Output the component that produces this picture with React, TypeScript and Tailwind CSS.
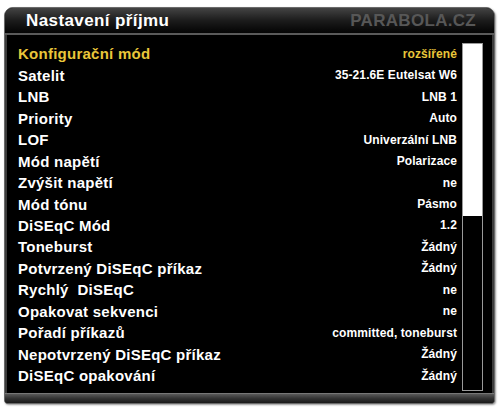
const rows: [string, string, boolean?][] = [
  ["Konfigurační mód", "rozšířené", true],
  ["Satelit", "35-21.6E Eutelsat W6"],
  ["LNB", "LNB 1"],
  ["Priority", "Auto"],
  ["LOF", "Univerzální LNB"],
  ["Mód napětí", "Polarizace"],
  ["Zvýšit napětí", "ne"],
  ["Mód tónu", "Pásmo"],
  ["DiSEqC Mód", "1.2"],
  ["Toneburst", "Žádný"],
  ["Potvrzený DiSEqC příkaz", "Žádný"],
  ["Rychlý  DiSEqC", "ne"],
  ["Opakovat sekvenci", "ne"],
  ["Pořadí příkazů", "committed, toneburst"],
  ["Nepotvrzený DiSEqC příkaz", "Žádný"],
  ["DiSEqC opakování", "Žádný"],
];

export default function App() {
  return (
    <div
      className="w-[500px] h-[410px] bg-white pt-[7px] pl-[4px]"
      style={{ fontFamily: '"Liberation Sans", Arial, sans-serif' }}
    >
      <div className="w-[491px] h-[397px] flex flex-col rounded-t-[9px] rounded-b-[4px] border border-[#6a6a6a] bg-black overflow-hidden shadow-[1px_1px_2px_rgba(0,0,0,0.4)]">
        {/* title bar */}
        <div className="h-[27px] shrink-0 flex items-center justify-between pl-[21px] pr-[18px] bg-gradient-to-b from-[#444] via-[#1c1c1c] to-[#050505] border-b-2 border-[#5a5a5a]">
          <span className="text-white font-bold text-[17px] tracking-[0.4px] leading-none">Nastavení příjmu</span>
          <span className="text-[#575757] font-bold text-[17px] tracking-[0.3px] leading-none">PARABOLA.CZ</span>
        </div>

        {/* content */}
        <div className="flex-1 flex border-x-2 border-[#3c3c3c]">
          <div className="flex-1 pl-[11px] pr-[5px] pt-[8px]">
            {rows.map(([label, value, active]) => (
              <div key={label} className="h-[21.47px] flex items-center justify-between">
                <span
                  className={`text-[15px] font-bold leading-none tracking-[0.25px] whitespace-pre ${active ? "text-[#e9c63a]" : "text-white"}`}
                >
                  {label}
                </span>
                <span
                  className={`text-[12px] font-bold leading-none tracking-[0.1px] ${active ? "text-[#e9c63a]" : "text-white"}`}
                >
                  {value}
                </span>
              </div>
            ))}
          </div>
          <div className="w-[21px] mt-[8px] mb-[2px] mr-[9px] flex flex-col border border-[#9a9a9a] bg-black">
            <div className="h-[172px] bg-white" />
          </div>
        </div>

        {/* bottom bar */}
        <div className="h-[10px] shrink-0 bg-gradient-to-b from-[#5a5a5a] via-[#333] to-[#1a1a1a] border-t border-[#777]" />
      </div>
    </div>
  );
}
